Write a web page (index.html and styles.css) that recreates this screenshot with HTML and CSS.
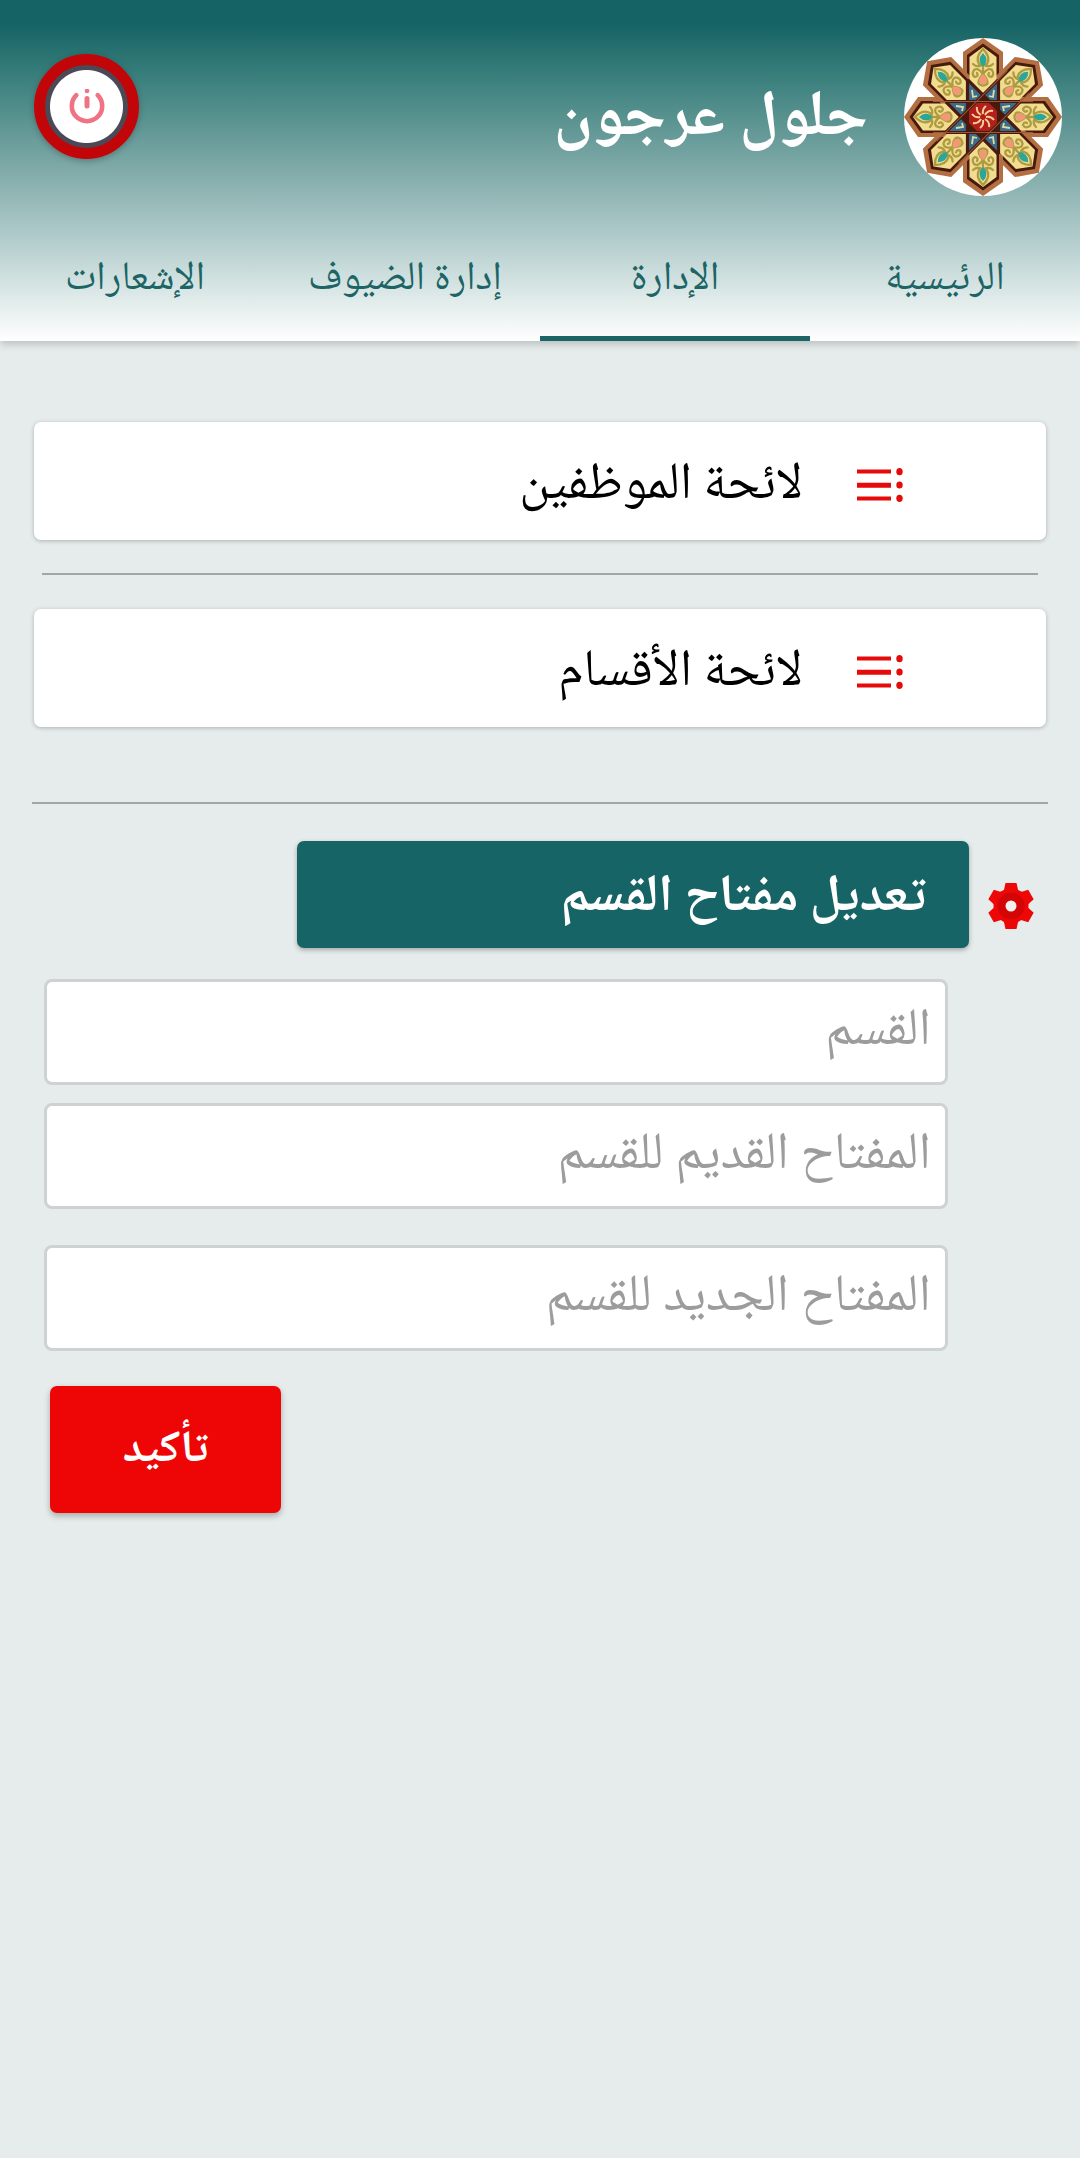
FILE: index.html
```html
<!DOCTYPE html>
<html lang="ar" dir="rtl">
<head>
<meta charset="utf-8">
<title>جلول عرجون</title>
<link rel="stylesheet" href="styles.css">
</head>
<body>
<header class="header">
  <div class="bar">
    <div class="brand">
      <svg class="logo" viewBox="-79 -79 158 158" width="158" height="158">
        <defs>
          <g id="frame">
            <path d="M0-79 20-65V-18H-20V-65Z" fill="#b36e42"/>
            <path d="M0-73.500 16-62V-14H-16V-62Z" fill="#48190d"/>
          </g>
          <g id="petal">
            <path d="M0-70 13.500-60V-36.500L0-23-13.500-36.500V-60Z" fill="#f2dc8f"/>
            <g fill="none" stroke="#ad9b42" stroke-width="2.300" stroke-linecap="round">
              <path d="M0-68Q-8-60-4-53Q0-50 4-53Q8-60 0-68M0-52V-44"/>
              <path d="M0-43Q-5-50-9-47Q-12-42-8-40Q-4-41-6-44M0-43Q5-50 9-47Q12-42 8-40Q4-41 6-44"/>
              <path d="M-10-53Q-7-50-3-51M10-53Q7-50 3-51"/>
              <path d="M0-43Q-6-36-4-33Q0-30 4-33Q6-36 0-43"/>
            </g>
            <path d="M0-64Q-7-57 0-50Q7-57 0-64Z" fill="#2ba698"/>
            <path d="M0-43Q-6-38-3-34Q0-31 3-34Q6-38 0-43Z" fill="#f19877"/>
          </g>
          <g id="gem">
            <path d="M-14-35V-17H-6L-1-22ZM14-35V-17H6L1-22Z" fill="#3b6c8c"/>
            <path d="M-11-27-10-20-6-21M11-27 10-20 6-21" fill="none" stroke="#dcdca4" stroke-width="1.800"/>
          </g>
          <path id="band" d="M-37-15.500H37" fill="none" stroke="#48190d" stroke-width="3.200"/>
          <path id="edge" d="M-50-15.500H50" fill="none" stroke="#9a5834" stroke-width="1"/>
        </defs>
        <circle r="79" fill="#fff"/>
        <use href="#frame"/><use href="#frame" transform="rotate(45)"/><use href="#frame" transform="rotate(90)"/><use href="#frame" transform="rotate(135)"/>
        <use href="#frame" transform="rotate(180)"/><use href="#frame" transform="rotate(225)"/><use href="#frame" transform="rotate(270)"/><use href="#frame" transform="rotate(315)"/>
        <circle r="34" fill="#48190d"/>
        <use href="#petal"/><use href="#petal" transform="rotate(45)"/><use href="#petal" transform="rotate(90)"/><use href="#petal" transform="rotate(135)"/>
        <use href="#petal" transform="rotate(180)"/><use href="#petal" transform="rotate(225)"/><use href="#petal" transform="rotate(270)"/><use href="#petal" transform="rotate(315)"/>
        <use href="#gem"/><use href="#gem" transform="rotate(90)"/><use href="#gem" transform="rotate(180)"/><use href="#gem" transform="rotate(270)"/>
        <use href="#band"/><use href="#band" transform="rotate(45)"/><use href="#band" transform="rotate(90)"/><use href="#band" transform="rotate(135)"/>
        <use href="#band" transform="rotate(180)"/><use href="#band" transform="rotate(225)"/><use href="#band" transform="rotate(270)"/><use href="#band" transform="rotate(315)"/>
        <use href="#edge"/><use href="#edge" transform="rotate(135)"/><use href="#edge" transform="rotate(180)"/><use href="#edge" transform="rotate(315)"/>
        <path d="M-6-14H6L14-6V6L6 14H-6L-14 6V-6Z" fill="#b3201b"/>
        <g stroke="#f5cf93" stroke-width="2" fill="none">
          <path d="M0-3Q-1-8 3-11M0 3Q1 8-3 11M3 0Q8-1 11 3M-3 0Q-8 1-11-3M2-2Q5-7 10-6M-2 2Q-5 7-10 6M2 2Q7 5 6 10M-2-2Q-7-5-6-10"/>
        </g>
      </svg>
      <h1 class="name"><span>جلول عرجون</span></h1>
    </div>
    <button class="power" aria-label="خروج">
      <svg viewBox="0 0 36 36" width="36" height="36" fill="none" stroke="#f07383" stroke-linecap="round">
        <path d="M7.300 6.200A15.200 15.200 0 1 0 28.700 6.200" stroke-width="4.600"/>
        <path d="M18 9.500V17" stroke-width="5"/>
        <circle cx="18" cy="1.900" r="2.300" fill="#f07383" stroke="none"/>
      </svg>
    </button>
  </div>
  <nav class="tabs">
    <a class="tab"><span>الرئيسية</span></a>
    <a class="tab active"><span>الإدارة</span></a>
    <a class="tab"><span>إدارة الضيوف</span></a>
    <a class="tab"><span>الإشعارات</span></a>
  </nav>
</header>
<main class="content">
  <section class="lists">
    <a class="card">
      <svg class="list-icon" viewBox="0 0 46 36" width="46" height="36" fill="#e50b0b">
        <path d="M0 2.500H34V6.500H0ZM0 15.700H34V20.700H0ZM0 29.500H34V33.500H0Z"/>
        <ellipse cx="42.500" cy="4.700" rx="3.200" ry="3.600"/><ellipse cx="42.500" cy="18" rx="3.200" ry="3.600"/><ellipse cx="42.500" cy="31.300" rx="3.200" ry="3.600"/>
      </svg>
      <span>لائحة الموظفين</span>
    </a>
    <hr class="rule short">
    <a class="card">
      <svg class="list-icon" viewBox="0 0 46 36" width="46" height="36" fill="#e50b0b">
        <path d="M0 2.500H34V6.500H0ZM0 15.700H34V20.700H0ZM0 29.500H34V33.500H0Z"/>
        <ellipse cx="42.500" cy="4.700" rx="3.200" ry="3.600"/><ellipse cx="42.500" cy="18" rx="3.200" ry="3.600"/><ellipse cx="42.500" cy="31.300" rx="3.200" ry="3.600"/>
      </svg>
      <span>لائحة الأقسام</span>
    </a>
  </section>
  <hr class="rule">
  <section class="editor">
    <div class="editor-head">
      <svg class="gear" viewBox="-24 -24 48 48" width="48" height="48">
        <g fill="#ee0707">
          <circle r="17.500"/>
          <path id="tooth" d="M-7.500-14-5.500-23H5.500L7.500-14V14L5.500 23H-5.500L-7.500 14Z"/>
          <use href="#tooth" transform="rotate(60)"/><use href="#tooth" transform="rotate(120)"/>
        </g>
        <circle r="13.500" fill="#d40505"/>
        <circle r="5.500" fill="#f4f1ef"/>
      </svg>
      <h2 class="title"><span>تعديل مفتاح القسم</span></h2>
    </div>
    <div class="fields">
      <div class="field"><span>القسم</span></div>
      <div class="field"><span>المفتاح القديم للقسم</span></div>
      <div class="field last"><span>المفتاح الجديد للقسم</span></div>
    </div>
    <button class="confirm"><span>تأكيد</span></button>
  </section>
</main>
</body>
</html>
```
FILE: styles.css
```css
* { box-sizing: border-box; }
body {
  margin: 0;
  min-height: 2158px;
  background: #e6ecec;
  font-family: "Noto Naskh Arabic", "Noto Sans Arabic", "Noto Sans", serif;
  color: #000;
}
h1, h2 { margin: 0; }
button { border: 0; padding: 0; font-family: inherit; }
span { white-space: nowrap; }
.header {
  height: 341px;
  background: linear-gradient(#156364 0, #156364 24px, #387e7b 75px, #7ca8a6 165px, #afcaca 235px, #e0ebea 300px, #fff 341px);
  box-shadow: 0 3px 8px rgba(0, 0, 0, .2);
}
.bar {
  height: 221px;
  padding: 38px 18px 0 34px;
  display: flex;
  justify-content: space-between;
}
.brand { display: flex; gap: 36px; }
.name { padding-top: 31px; line-height: 104px; font-size: 64.6px; font-weight: 700; color: #fff; }
.power {
  margin-top: 16px;
  width: 105px;
  height: 105px;
  border-radius: 50%;
  border: 11.500px solid #c10509;
  background: radial-gradient(circle, #fff 36px, #4a4956 37px);
  background-origin: border-box;
  display: flex;
  align-items: center;
  justify-content: center;
  box-shadow: 0 2px 6px rgba(0, 0, 0, .25);
}
.tabs { display: grid; grid-template-columns: repeat(4, 1fr); height: 120px; }
.tab {
  display: flex;
  justify-content: center;
  line-height: 119px;
  height: 120px;
  font-size: 40.3px;
  color: #1c6465;
  border-bottom: 5px solid transparent;
}
.tab.active { border-bottom-color: #1c6465; }
.content { padding: 81px 32px 0; }
.lists { padding: 0 2px; }
.card {
  height: 118px;
  padding-right: 143px;
  display: flex;
  align-items: center;
  gap: 54px;
  border-radius: 7px;
  background: #fff;
  box-shadow: 0 1px 4px rgba(0, 0, 0, .25);
  font-size: 52px;
  line-height: 106px;
}
.card span { padding-top: 12px; }
.list-icon { margin-top: 8px; }
.rule { margin: 75px 0 37px; border: 0; height: 2px; background: #a0a5a5; }
.rule.short { margin: 33px 8px 34px; }
.editor-head { display: flex; justify-content: flex-start; gap: 18px; padding-right: 13px; }
.gear { margin-top: 41px; }
.title {
  width: 672px;
  height: 107px;
  padding-right: 43px;
  line-height: 115px;
  border-radius: 7px;
  background: #166465;
  color: #fff;
  font-size: 52px;
  box-shadow: 0 2px 5px rgba(0, 0, 0, .3);
}
.fields { width: 904px; margin: 31px 100px 0 0; display: flex; flex-direction: column; gap: 18px; }
.field {
  height: 106px;
  padding-right: 14px;
  border: 3px solid #cfd2d2;
  border-radius: 8px;
  background: #fff;
  color: #9c9c9c;
  font-size: 52.2px;
  line-height: 102px;
}
.field.last { margin-top: 18px; }
.confirm {
  display: block;
  width: 231px;
  height: 127px;
  margin: 35px auto 0 18px;
  padding-top: 2px;
  border-radius: 7px;
  background: #ee0606;
  color: #fff;
  font-size: 44.6px;
  font-weight: 700;
  box-shadow: 0 3px 6px rgba(0, 0, 0, .28);
}
```
